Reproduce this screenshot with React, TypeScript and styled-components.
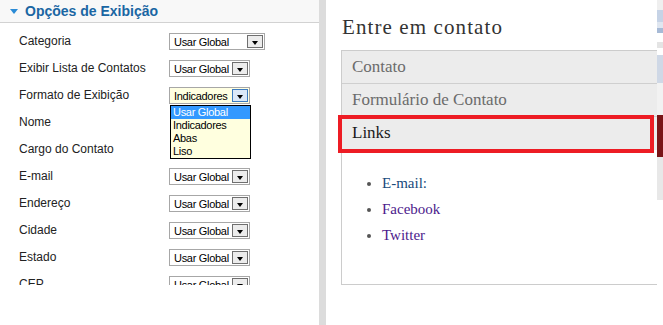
import React from "react";
import styled, { createGlobalStyle } from "styled-components";

const Global = createGlobalStyle`
  html, body { margin: 0; padding: 0; background: #fff; }
  body { width: 663px; height: 325px; overflow: hidden; }
`;

const Page = styled.div`
  display: flex;
  width: 663px;
  height: 325px;
  overflow: hidden;
  background: #fff;
`;

const LeftPanel = styled.div`
  width: 319px;
  flex: none;
  display: flex;
  flex-direction: column;
`;

const Header = styled.div`
  height: 22px;
  flex: none;
  background: #f8f8f8;
  border-bottom: 1px solid #d2d2d2;
  display: flex;
  align-items: center;
  gap: 7px;
  padding-left: 10px;
  font-family: "Liberation Sans", Arial, sans-serif;
  font-weight: bold;
  font-size: 14px;
  color: #1a66a3;
`;

const Arrow = styled.span`
  width: 0;
  height: 0;
  border-left: 4px solid transparent;
  border-right: 4px solid transparent;
  border-top: 5px solid #2b8bd6;
  margin-top: 1px;
`;

const Body = styled.div`
  height: 262px;
  overflow: hidden;
  padding: 5px 0 0 19px;
  box-sizing: border-box;
`;

const Row = styled.div`
  display: grid;
  grid-template-columns: 150px auto;
  align-items: center;
  height: 27px;
`;

const Label = styled.span`
  font-family: "Liberation Sans", Arial, sans-serif;
  font-size: 12px;
  color: #222;
  margin-top: -1px;
`;

const SelectBox = styled.div<{ $w: number; $focus?: boolean; $covered?: boolean }>`
  position: relative;
  width: ${(p) => p.$w}px;
  height: 17px;
  box-sizing: border-box;
  border: 1px solid #a7a7a7;
  background: ${(p) => (p.$focus ? "#ffffe1" : "#fff")};
  display: flex;
  align-items: center;
  justify-content: space-between;
  padding: 0 1px 0 4px;
  font-family: "Liberation Sans", Arial, sans-serif;
  font-size: 11px;
  letter-spacing: -0.3px;
  color: #000;
  visibility: ${(p) => (p.$covered ? "hidden" : "visible")};
`;

const DropBtn = styled.span<{ $focus?: boolean }>`
  width: 16px;
  height: 13px;
  box-sizing: border-box;
  border: 1px solid ${(p) => (p.$focus ? "#3d7cc0" : "#6f6f6f")};
  background: ${(p) => (p.$focus ? "#dbe9f8" : "#ececec")};
  display: flex;
  align-items: center;
  justify-content: center;
  &::after {
    content: "";
    border-left: 3.5px solid transparent;
    border-right: 3.5px solid transparent;
    border-top: 4px solid #000;
    margin-top: 2px;
  }
`;

const OptionList = styled.div`
  position: absolute;
  top: 17px;
  left: 0;
  width: 81px;
  box-sizing: border-box;
  border: 1px solid #000;
  background: #ffffdf;
  z-index: 2;
`;

const Option = styled.div<{ $active?: boolean }>`
  height: 13px;
  line-height: 13px;
  padding-left: 2px;
  font-family: "Liberation Sans", Arial, sans-serif;
  font-size: 11px;
  letter-spacing: -0.3px;
  background: ${(p) => (p.$active ? "#3399ff" : "transparent")};
  color: ${(p) => (p.$active ? "#fff" : "#000")};
`;

const Gutter = styled.div`
  width: 7px;
  flex: none;
  background: #dcdcdc;
`;

const RightPanel = styled.div`
  flex: 1;
  padding-left: 15px;
  display: flex;
  flex-direction: column;
`;

const Title = styled.h2`
  margin: 12px 0 8px 1px;
  height: 30px;
  line-height: 30px;
  font-family: "Liberation Serif", "Times New Roman", serif;
  font-weight: normal;
  font-size: 21px;
  letter-spacing: 1.1px;
  color: #333;
`;

const Box = styled.div`
  border: 1px solid #cccccc;
  border-right: none;
`;

const Tab = styled.div<{ $active?: boolean }>`
  position: relative;
  height: 32px;
  line-height: 32px;
  padding-left: 10px;
  background: #ececec;
  border-bottom: 1px solid ${(p) => (p.$active ? "transparent" : "#cfcfcf")};
  font-family: "Liberation Serif", "Times New Roman", serif;
  font-size: 17px;
  color: ${(p) => (p.$active ? "#1a1a1a" : "#6b6b6b")};
  ${(p) =>
    p.$active &&
    `
    &::after {
      content: "";
      position: absolute;
      top: -2px;
      left: -4px;
      right: 3px;
      bottom: -4px;
      border: 4px solid #ed1c24;
    }
  `}
`;

const LinkList = styled.ul`
  margin: 0;
  padding: 20px 0 36px 40px;
  list-style: disc;
`;

const LinkItem = styled.li`
  height: 26px;
  line-height: 26px;
  font-family: "Liberation Serif", "Times New Roman", serif;
  font-size: 15px;
  &::marker {
    color: #555;
  }
`;

const LinkText = styled.span<{ $visited?: boolean }>`
  color: ${(p) => (p.$visited ? "#4c1a8c" : "#184a7c")};
`;

const Strip = styled.div`
  width: 6px;
  flex: none;
  display: flex;
  flex-direction: column;
`;

const Segment = styled.div<{ $h: number; $bg: string }>`
  height: ${(p) => p.$h}px;
  background: ${(p) => p.$bg};
  flex: none;
`;

const fields = [
  "Categoria",
  "Exibir Lista de Contatos",
  "Formato de Exibição",
  "Nome",
  "Cargo do Contato",
  "E-mail",
  "Endereço",
  "Cidade",
  "Estado",
  "CEP",
];

const stripSegments: [number, string][] = [
  [10, "#efefef"],
  [12, "#c6d3e6"],
  [6, "#dfe6f0"],
  [5, "#a7bad6"],
  [9, "#ffffff"],
  [6, "#e4e4e4"],
  [7, "#ffffff"],
  [28, "#cfd8e6"],
  [32, "#f2f2f2"],
  [42, "#7a1417"],
  [43, "#e8e8e8"],
  [125, "#ffffff"],
];

export default function App() {
  return (
    <>
      <Global />
      <Page>
        <LeftPanel>
          <Header>
            <Arrow />
            Opções de Exibição
          </Header>
          <Body>
            {fields.map((f, i) => {
              const focus = i === 2;
              // the open option list hides the two selects below it
              const covered = i === 3 || i === 4;
              return (
                <Row key={f}>
                  <Label>{f}</Label>
                  <SelectBox $w={i === 0 ? 96 : 81} $focus={focus} $covered={covered}>
                    <span>{focus ? "Indicadores" : "Usar Global"}</span>
                    <DropBtn $focus={focus} />
                    {focus && (
                      <OptionList>
                        <Option $active>Usar Global</Option>
                        <Option>Indicadores</Option>
                        <Option>Abas</Option>
                        <Option>Liso</Option>
                      </OptionList>
                    )}
                  </SelectBox>
                </Row>
              );
            })}
          </Body>
        </LeftPanel>
        <Gutter />
        <RightPanel>
          <Title>Entre em contato</Title>
          <Box>
            <Tab>Contato</Tab>
            <Tab>Formulário de Contato</Tab>
            <Tab $active>Links</Tab>
            <LinkList>
              <LinkItem>
                <LinkText>E-mail:</LinkText>
              </LinkItem>
              <LinkItem>
                <LinkText $visited>Facebook</LinkText>
              </LinkItem>
              <LinkItem>
                <LinkText $visited>Twitter</LinkText>
              </LinkItem>
            </LinkList>
          </Box>
        </RightPanel>
        <Strip>
          {stripSegments.map(([h, bg], i) => (
            <Segment key={i} $h={h} $bg={bg} />
          ))}
        </Strip>
      </Page>
    </>
  );
}
